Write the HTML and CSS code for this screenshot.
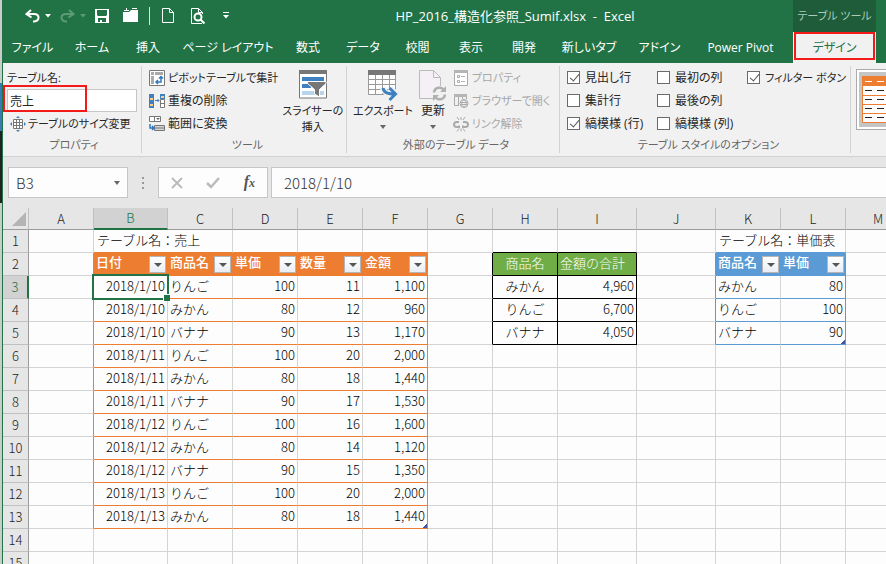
FILE: index.html
```
<!DOCTYPE html>
<html lang="ja">
<head>
<meta charset="UTF-8">
<meta name="viewport" content="width=device-width, initial-scale=1.0">
<title>HP_2016_構造化参照_Sumif.xlsx - Excel</title>
<link rel="stylesheet" href="styles.css">
</head>
<body>
<div class="app">
    <header class="top">
        <div class="top-main">
            <div class="titlebar">
                <div class="quick">
                    <button aria-label="元に戻す"><svg width="15" height="14" viewBox="0 0 15 14" fill="none" stroke="#fff" stroke-width="2"><path d="M6 1L1.500 5L6.500 8.500M2 5H9C15 5 15 12 9 12.500H8"/></svg></button>
                    <button aria-label="元に戻すの一覧"><svg width="6" height="4" viewBox="0 0 6 4"><path d="M0 0H6L3 3.500Z" fill="#fff"/></svg></button>
                    <button aria-label="やり直し"><svg width="15" height="14" viewBox="0 0 15 14" fill="none" stroke="#5c9a77" stroke-width="2"><path d="M9 1L13.500 5L8.500 8.500M13 5H6C0 5 0 12 6 12.500H7"/></svg></button>
                    <button aria-label="やり直しの一覧"><svg width="6" height="4" viewBox="0 0 6 4"><path d="M0 0H6L3 3.500Z" fill="#5c9a77"/></svg></button>
                    <button aria-label="上書き保存"><svg width="14" height="14" viewBox="0 0 14 14"><path fill="#fff" fill-rule="evenodd" d="M0 0H14V14H0ZM2 1V6L3 7H11L12 6V1ZM3 9V13H5V11H7V13H11V9Z"/></svg></button>
                    <button aria-label="開く"><svg width="16" height="15" viewBox="0 0 16 15"><path fill="#fff" d="M0 4H6L8 2H15V14H0ZM1 2H3V0H4V2H6V3H1ZM9 0H14V1H9Z"/></svg></button>
                    <span class="quick-line"></span>
                    <button aria-label="新規"><svg width="12" height="15" viewBox="0 0 12 15" fill="none" stroke="#fff"><path d="M.5.5H7.500L11.500 4.500V14.500H.5ZM7.500.5V4.500H11.500"/></svg></button>
                    <button aria-label="印刷プレビュー"><svg width="15" height="16" viewBox="0 0 15 16" fill="none" stroke="#fff"><path d="M11 15.500H.5V.5H7.500L11.500 4.500V6M7.500.5V4.500H11.500"/><circle cx="7" cy="9" r="3.500" stroke-width="2"/><path d="M9.500 11.500L13.500 15.500" stroke-width="2"/></svg></button>
                    <button aria-label="クイック アクセスの設定"><svg width="6" height="7" viewBox="0 0 6 7"><path d="M0 0H6V1H0ZM0 3H6L3 6.500Z" fill="#fff"/></svg></button>
                </div>
                <div class="title">HP_2016_構造化参照_Sumif.xlsx &nbsp;-&nbsp; Excel</div>
            </div>
            <nav class="tabs">
                <button>ファイル</button>
                <button>ホーム</button>
                <button>挿入</button>
                <button>ページ レイアウト</button>
                <button>数式</button>
                <button>データ</button>
                <button>校閲</button>
                <button>表示</button>
                <button>開発</button>
                <button>新しいタブ</button>
                <button>アドイン</button>
                <button>Power Pivot</button>
            </nav>
        </div>
        <div class="context">
            <div class="context-name">テーブル ツール</div>
            <button class="context-tab">デザイン</button>
        </div>
    </header>

    <section class="ribbon">
        <div class="group group-props">
            <div class="rows">
                <label for="tableName">テーブル名:</label>
                <div class="name-field"><input type="text" id="tableName" value="売上"></div>
                <button class="cmd cmd-resize">
                    <svg width="16" height="16" viewBox="0 0 16 16"><path fill="#fff" stroke="#777" d="M3.500 3.500H12.500V12.500H3.500ZM3.500 6.500H12.500M3.500 9.500H12.500M6.500 3.500V12.500M9.500 3.500V12.500"/><path fill="#3f80c0" d="M8 0L10 2H6ZM8 16L10 14H6ZM0 8L2 6V10ZM16 8L14 6V10Z"/></svg>
                    テーブルのサイズ変更
                </button>
            </div>
            <div class="group-name">プロパティ</div>
        </div>

        <div class="group group-tools">
            <div class="cols">
                <div class="rows">
                    <button class="cmd">
                        <svg width="16" height="16" viewBox="0 0 16 16"><path fill="#fff" stroke="#777" d="M.5.5H15.500V15.500H.5Z"/><path fill="#aaa" d="M2 2H5V5H2ZM6 2H14V5H6ZM2 6H5V14H2Z"/><path fill="none" stroke="#2f78c0" stroke-width="1.500" d="M12 6.500V12H7M10 8.500L12 6.500L14 8.500M9 10L7 12L9 14"/></svg>
                        ピボットテーブルで集計
                    </button>
                    <button class="cmd cmd-wide">
                        <svg width="16" height="16" viewBox="0 0 16 16"><path fill="#3f80c0" d="M0 1H5V15H0ZM11 1H16V6H11Z"/><path fill="#f5d18a" d="M1 5H4V7H1ZM1 11H4V13H1ZM12 3H15V5H12Z"/><path fill="#fff" stroke="#777" d="M11.500 6.500H15.500V14.500H11.500ZM11.500 10.500H15.500"/><path fill="none" stroke="#3f80c0" d="M6 7.500H10M8.500 6L10 7.500L8.500 9"/></svg>
                        重複の削除
                    </button>
                    <button class="cmd cmd-wide">
                        <svg width="16" height="16" viewBox="0 0 16 16"><path fill="#fff" stroke="#777" d="M.5.5H11.500V5.500H.5ZM5.500.5V5.500"/><path fill="#666" d="M7 2H11L9 4Z"/><path fill="#d5d5d5" stroke="#777" d="M5.500 9.500H15.500V14.500H5.500ZM5.500 12H15.500"/><path fill="none" stroke="#2f78c0" stroke-width="1.500" d="M1 8V12H5M3 10L5 12L3 14"/></svg>
                        範囲に変換
                    </button>
                </div>
                <button class="big big-slicer">
                    <svg width="28" height="29" viewBox="0 0 28 29"><path fill="#fff" stroke="#777" d="M.5.5H27.500V28H.5Z"/><path fill="#777" d="M0 0H28V4H0Z"/><path fill="#3f80c0" d="M3 7H25V11H3ZM3 14H12V18H3Z"/><path fill="#b8d4ec" d="M3 21H25V25H3Z"/><path fill="#777" stroke="#fff" d="M8.500 11.500H27V13.500L20.500 19.500V27L15.500 24V19.500L8.500 13.500Z"/></svg>
                    <span>スライサーの<br>挿入</span>
                </button>
            </div>
            <div class="group-name">ツール</div>
        </div>

        <div class="group group-external">
            <div class="cols">
                <button class="big big-export">
                    <svg width="30" height="31" viewBox="0 0 30 31"><path fill="#fff" stroke="#999" d="M.5.5H27.500V24.500H.5ZM.5 9.500H27.500M.5 14.500H27.500M.5 19.500H27.500M7.500 4V24M14.500 4V24M21.500 4V24"/><path fill="#777" d="M0 0H28V5H0Z"/><path fill="none" stroke="#f1f1f1" stroke-width="6" d="M15 18C16 23 20 24 27 24M22 18L28 24L22 30"/><path fill="none" stroke="#3f80c0" stroke-width="3" d="M15 18C16 23 20 24 27 24M21.500 18L27.500 24L21.500 30"/></svg>
                    <span>エクスポート</span>
                    <i class="caret"></i>
                </button>
                <button class="big big-refresh">
                    <svg width="28" height="31" viewBox="0 0 28 31" fill="none"><path fill="#f5f0f6" stroke="#bbb" d="M.5.5H14.500L21.500 7.500V28.500H.5ZM14.500.5V7.500H21.500"/><circle cx="20.500" cy="23.500" r="7.500" fill="#f1f1f1"/><path stroke="#b0b0b0" stroke-width="2.500" d="M15 22.500C15.500 17 22 16.500 24.500 19.500M26 24.500C25.500 30 19 30.500 16.500 27.500"/><path fill="#b0b0b0" d="M27 16V22H21ZM14 31V25H20Z"/></svg>
                    <span>更新</span>
                    <i class="caret"></i>
                </button>
                <div class="rows rows-off">
                    <button class="cmd" disabled>
                        <svg width="16" height="16" viewBox="0 0 16 16"><path fill="#fff" stroke="#aaa" d="M1.500.5H14.500V15.500H1.500Z"/><path fill="#b5b5b5" d="M1 0H15V3H1ZM8 6H12V7H8ZM8 11H12V12H8Z"/><path fill="none" stroke="#aaa" d="M4.500 5.500H6.500V7.500H4.500ZM4.500 10.500H6.500V12.500H4.500Z"/></svg>
                        プロパティ
                    </button>
                    <button class="cmd" disabled>
                        <svg width="16" height="16" viewBox="0 0 16 16" fill="none" stroke="#aaa"><path d="M1.500 1.500H13.500V6M1.500 1.500V12.500H6M5.500 3V12M9.500 3V6"/><path fill="#b5b5b5" stroke="none" d="M1 1H14V4H1Z"/><circle cx="11" cy="10.500" r="4" fill="#f1f1f1"/><path d="M7 9.500H15M7 11.500H15M11 6.500C8 9 8 12 11 14.500C14 12 14 9 11 6.500"/></svg>
                        ブラウザーで開く
                    </button>
                    <button class="cmd" disabled>
                        <svg width="16" height="16" viewBox="0 0 16 16" fill="none" stroke="#aaa"><path stroke-width="2" d="M6 6H4C0 6 0 11 4 11H6V9.500M10 6H12C16 6 16 11 12 11H10V9.500"/><path d="M8 1V4M4 1L6 4M12 1L10 4M8 12.500V15.500M4 15.500L6 12.500M12 15.500L10 12.500"/></svg>
                        リンク解除
                    </button>
                </div>
            </div>
            <div class="group-name">外部のテーブル データ</div>
        </div>

        <div class="group group-options">
            <div class="checks">
                <label><input type="checkbox" checked>見出し行</label>
                <label><input type="checkbox">最初の列</label>
                <label class="check-filter"><input type="checkbox" checked>フィルター ボタン</label>
                <label><input type="checkbox">集計行</label>
                <label><input type="checkbox">最後の列</label>
                <span></span>
                <label><input type="checkbox" checked>縞模様 (行)</label>
                <label><input type="checkbox">縞模様 (列)</label>
            </div>
            <div class="group-name">テーブル スタイルのオプション</div>
        </div>

        <div class="gallery">
            <button class="style-thumb" aria-label="テーブル スタイル">
                <svg width="60" height="47" viewBox="0 0 60 47"><path fill="#fff" stroke="#ed7d31" d="M.5.5H59.500V46.500H.5ZM0 19.500H60M0 28.500H60M0 37.500H60"/><path fill="#ed7d31" d="M0 0H60V10H0Z"/><path stroke="#fff" stroke-dasharray="7 5" d="M3 5.500H60"/><path stroke="#222" stroke-dasharray="7 5" d="M3 14.500H60M3 23.500H60M3 32.500H60M3 41.500H60"/></svg>
            </button>
        </div>
    </section>

    <section class="formula-bar">
        <div class="name-box">
            <input type="text" value="B3" aria-label="名前ボックス">
            <i class="caret"></i>
        </div>
        <svg class="dots" width="2" height="12" viewBox="0 0 2 12"><path fill="#999" d="M0 0H2V2H0ZM0 5H2V7H0ZM0 10H2V12H0Z"/></svg>
        <div class="fx-box">
            <button aria-label="キャンセル"><svg width="12" height="12" viewBox="0 0 12 12"><path stroke="#bbb" stroke-width="2" d="M1 1L11 11M11 1L1 11"/></svg></button>
            <button aria-label="入力"><svg width="14" height="12" viewBox="0 0 14 12"><path fill="none" stroke="#bbb" stroke-width="2.500" d="M1 6L5 10L13 1"/></svg></button>
            <button class="fx" aria-label="関数の挿入">f<small>x</small></button>
        </div>
        <input class="formula" type="text" value="2018/1/10" aria-label="数式バー">
    </section>

    <main class="sheet">
        <table>
            <colgroup>
                <col class="w-head"><col><col class="w-date"><col><col><col><col><col><col><col class="w-wide"><col class="w-wide"><col><col><col>
            </colgroup>
            <thead>
                <tr><th class="corner"><svg width="14" height="14" viewBox="0 0 14 14"><path fill="#b4b4b4" d="M14 0V14H0Z"/></svg></th><th>A</th><th class="active">B</th><th>C</th><th>D</th><th>E</th><th>F</th><th>G</th><th>H</th><th>I</th><th>J</th><th>K</th><th>L</th><th>M</th></tr>
            </thead>
            <tbody>
                <tr class="captions"><th>1</th><td></td><td colspan="2">テーブル名：売上</td><td></td><td></td><td></td><td></td><td></td><td></td><td></td><td colspan="2">テーブル名：単価表</td><td></td></tr>
                <tr class="sales lookup heads">
                    <th>2</th><td></td>
                    <td><div class="head">日付<button class="filter" aria-label="日付"></button></div></td>
                    <td><div class="head">商品名<button class="filter" aria-label="商品名"></button></div></td>
                    <td><div class="head">単価<button class="filter" aria-label="単価"></button></div></td>
                    <td><div class="head">数量<button class="filter" aria-label="数量"></button></div></td>
                    <td><div class="head">金額<button class="filter" aria-label="金額"></button></div></td>
                    <td></td><td>商品名</td><td>金額の合計</td><td></td>
                    <td><div class="head">商品名<button class="filter" aria-label="商品名"></button></div></td>
                    <td><div class="head">単価<button class="filter" aria-label="単価"></button></div></td>
                    <td></td>
                </tr>
                <tr class="sales lookup"><th class="active">3</th><td></td><td class="selected">2018/1/10</td><td>りんご</td><td>100</td><td>11</td><td>1,100</td><td></td><td>みかん</td><td>4,960</td><td></td><td>みかん</td><td>80</td><td></td></tr>
                <tr class="sales lookup"><th>4</th><td></td><td>2018/1/10</td><td>みかん</td><td>80</td><td>12</td><td>960</td><td></td><td>りんご</td><td>6,700</td><td></td><td>りんご</td><td>100</td><td></td></tr>
                <tr class="sales lookup"><th>5</th><td></td><td>2018/1/10</td><td>バナナ</td><td>90</td><td>13</td><td>1,170</td><td></td><td>バナナ</td><td>4,050</td><td></td><td>バナナ</td><td class="last">90</td><td></td></tr>
                <tr class="sales"><th>6</th><td></td><td>2018/1/11</td><td>りんご</td><td>100</td><td>20</td><td>2,000</td><td></td><td></td><td></td><td></td><td></td><td></td><td></td></tr>
                <tr class="sales"><th>7</th><td></td><td>2018/1/11</td><td>みかん</td><td>80</td><td>18</td><td>1,440</td><td></td><td></td><td></td><td></td><td></td><td></td><td></td></tr>
                <tr class="sales"><th>8</th><td></td><td>2018/1/11</td><td>バナナ</td><td>90</td><td>17</td><td>1,530</td><td></td><td></td><td></td><td></td><td></td><td></td><td></td></tr>
                <tr class="sales"><th>9</th><td></td><td>2018/1/12</td><td>りんご</td><td>100</td><td>16</td><td>1,600</td><td></td><td></td><td></td><td></td><td></td><td></td><td></td></tr>
                <tr class="sales"><th>10</th><td></td><td>2018/1/12</td><td>みかん</td><td>80</td><td>14</td><td>1,120</td><td></td><td></td><td></td><td></td><td></td><td></td><td></td></tr>
                <tr class="sales"><th>11</th><td></td><td>2018/1/12</td><td>バナナ</td><td>90</td><td>15</td><td>1,350</td><td></td><td></td><td></td><td></td><td></td><td></td><td></td></tr>
                <tr class="sales"><th>12</th><td></td><td>2018/1/13</td><td>りんご</td><td>100</td><td>20</td><td>2,000</td><td></td><td></td><td></td><td></td><td></td><td></td><td></td></tr>
                <tr class="sales"><th>13</th><td></td><td>2018/1/13</td><td>みかん</td><td>80</td><td>18</td><td class="last">1,440</td><td></td><td></td><td></td><td></td><td></td><td></td><td></td></tr>
                <tr><th>14</th><td></td><td></td><td></td><td></td><td></td><td></td><td></td><td></td><td></td><td></td><td></td><td></td><td></td></tr>
                <tr><th>15</th><td></td><td></td><td></td><td></td><td></td><td></td><td></td><td></td><td></td><td></td><td></td><td></td><td></td></tr>
            </tbody>
        </table>
    </main>
</div>
</body>
</html>
```
FILE: styles.css
```
* {
    box-sizing: border-box;
}
body {
    margin: 0;
    overflow: hidden;
    background: linear-gradient(#c9cdca 83px, #3b79b4 83px, #3b79b4 131px, #222 131px, #222 203px, #c9cdca 203px);
    font-family: "Open Sans", "Noto Sans CJK JP", sans-serif;
    font-size: 12px;
    line-height: 16px;
    color: #262626;
}
button, input {
    font: inherit;
    color: inherit;
    padding: 0;
    margin: 0;
    border: none;
    background: none;
    outline: none;
}
svg {
    display: block;
    flex: none;
}
.app {
    display: flex;
    flex-direction: column;
    height: 100vh;
    margin-left: 2px;
    border-left: 1px solid #217346;
    background: #e6e6e6;
}
.caret {
    border: 3px solid transparent;
    border-top: 4px solid #666;
    border-bottom: none;
}

/* title bar and tabs */
.top {
    display: flex;
    padding-right: 10px;
    background: #217346;
    color: #fff;
    font-feature-settings: "palt";
}
.top-main {
    flex: 1;
}
.titlebar {
    display: flex;
    align-items: center;
    height: 31px;
}
.quick {
    display: grid;
    grid-template-columns: 20px 15px 20px 15px 28px 26px 13px 29px 32px 14px;
    align-items: center;
    padding-left: 22px;
}
.quick-line {
    width: 1px;
    height: 18px;
    background: #d5e5dc;
}
.title {
    flex: 1;
    text-align: center;
    font-size: 13px;
    white-space: nowrap;
}
.tabs {
    display: grid;
    grid-template-columns: 59px 60px 52px 108px 52px 58px 51px 56px 50px 80px 61px 101px;
    height: 32px;
    padding-top: 2px;
    white-space: nowrap;
}
.context {
    width: 83px;
    text-align: center;
}
.context-name {
    height: 32px;
    line-height: 32px;
    font-size: 11px;
    background: #1e5c3a;
    color: #a9cdb8;
}
.context-tab {
    position: relative;
    width: 100%;
    height: 31px;
    background: #f1f1f1;
    color: #217346;
}
.context-tab::after, .name-field::after {
    content: "";
    position: absolute;
    border: 2px solid #f51a1a;
    pointer-events: none;
}
.context-tab::after {
    inset: 0 1px 3px 1px;
}

/* ribbon */
.ribbon {
    display: flex;
    height: 94px;
    padding: 3px 0;
    background: #f1f1f1;
    border-bottom: 1px solid #d2d2d2;
    font-size: 11px;
    white-space: nowrap;
    font-feature-settings: "palt";
    overflow: hidden;
}
.group {
    display: flex;
    flex-direction: column;
    justify-content: space-between;
    flex: none;
    border-right: 1px solid #d2d2d2;
}
.group-props {
    width: 139px;
    padding-left: 4px;
}
.group-tools {
    width: 205px;
    padding-left: 7px;
}
.group-external {
    width: 213px;
    padding-left: 6px;
}
.group-options {
    width: 291px;
    padding-left: 7px;
}
.group-name {
    text-align: center;
    color: #666;
    line-height: 17px;
}
.rows {
    display: grid;
    grid-template-rows: repeat(3, 23px);
    align-items: center;
}
.cols {
    display: flex;
}
.cmd {
    display: flex;
    align-items: center;
    gap: 3px;
}
.cmd-wide {
    font-size: 12px;
}
.cmd-resize {
    padding-left: 3px;
    gap: 2px;
}
.cmd:disabled {
    color: #a8a8a8;
}
.name-field {
    position: relative;
    width: 130px;
    height: 23px;
}
.name-field input {
    width: 100%;
    height: 100%;
    padding-left: 2px;
    font-size: 12px;
    background: #fff;
    border: 1px solid #c6c6c6;
}
.name-field::after {
    inset: -4px 50px 0 -4px;
}
.big {
    display: flex;
    flex-direction: column;
    align-items: center;
    padding-top: 4px;
}
.big .caret {
    margin-top: 4px;
}
.big-slicer {
    margin-left: 4px;
    gap: 4px;
}
.big-export, .big-refresh {
    gap: 2px;
}
.big-refresh {
    margin-left: 6px;
    font-size: 12px;
}
.rows-off {
    margin-left: 6px;
}
.checks {
    display: grid;
    grid-template-columns: 90px 90px 90px;
    grid-auto-rows: 23px;
    align-items: center;
    font-size: 12px;
}
.checks label {
    display: flex;
    align-items: center;
    gap: 5px;
}
.checks .check-filter {
    font-size: 11px;
}
.checks input {
    appearance: none;
    flex: none;
    width: 13px;
    height: 13px;
    border: 1px solid #6a6a6a;
    background: #fff;
}
.checks input:checked::before {
    content: "";
    display: block;
    width: 4px;
    height: 8px;
    margin-left: 4px;
    border: solid #555;
    border-width: 0 1px 1px 0;
    transform: rotate(40deg);
}
.gallery {
    flex: 1;
    align-self: flex-start;
    margin: 3px 0 0 5px;
    padding: 2px 0 2px 2px;
    border: 1px solid #ababab;
    border-right: none;
    background: #fff;
    overflow: hidden;
}
.style-thumb {
    display: block;
    padding: 4px 0 4px 3px;
    background: #c5c5c5;
}

/* formula bar */
.formula-bar {
    display: flex;
    align-items: center;
    padding: 10px 0 10px 5px;
    font-family: "Noto Sans CJK JP", sans-serif;
    font-size: 15px;
    font-weight: 300;
    color: #333;
}
.name-box, .fx-box, .formula {
    height: 31px;
    background: #fdfdfd;
    border: 1px solid #c6c6c6;
}
.name-box {
    display: flex;
    align-items: center;
    width: 120px;
    padding: 0 7px;
}
.name-box input {
    flex: 1;
    min-width: 0;
}
.dots {
    margin: 0 14px;
}
.fx-box {
    display: flex;
    align-items: center;
    justify-content: space-between;
    width: 110px;
    padding: 0 12px;
    margin-right: 3px;
}
.fx {
    font-family: "Liberation Serif", serif;
    font-style: italic;
    font-weight: bold;
    font-size: 16px;
    color: #555;
}
.fx small {
    font-size: 12px;
}
.formula {
    flex: 1;
    min-width: 0;
    padding-left: 12px;
    border-right: none;
}

/* worksheet */
.sheet {
    flex: 1;
    overflow: hidden;
    background: #fdfdfd;
    font-family: "Noto Sans CJK JP", sans-serif;
    font-size: 13px;
    font-weight: 300;
    color: #000;
}
table {
    width: 908px;
    table-layout: fixed;
    border-collapse: separate;
    border-spacing: 0;
    line-height: 18px;
}
col {
    width: 65px;
}
.w-head {
    width: 26px;
}
.w-date {
    width: 74px;
}
.w-wide {
    width: 79px;
}
th {
    padding: 0;
    background: #e6e6e6;
    font-weight: 300;
    color: #222;
    border-right: 1px solid #c0c0c0;
    border-bottom: 1px solid #9b9b9b;
}
thead th {
    height: 22px;
}
tbody th {
    height: 23px;
    border-right-color: #9b9b9b;
    border-bottom-color: #c0c0c0;
}
th.active {
    background: #d2d2d2;
    color: #217346;
}
thead th.active {
    border-bottom: 2px solid #217346;
}
tbody th.active {
    border-right: 2px solid #217346;
}
.corner svg {
    margin-left: 9px;
}
td {
    height: 23px;
    padding: 0 2px 2px;
    border-right: 1px solid #d4d4d4;
    border-bottom: 1px solid #d4d4d4;
    white-space: nowrap;
}
.captions td {
    padding-left: 3px;
}

/* sales table, B to F */
.sales td:nth-child(3), .sales td:nth-child(n+5):nth-child(-n+7) {
    text-align: right;
}
.captions td:nth-child(n+3):nth-child(-n+6),
.sales td:nth-child(n+3):nth-child(-n+7) {
    border-bottom-color: #ed7d31;
}
.sales td:nth-child(2), .sales td:nth-child(7) {
    border-right-color: #ed7d31;
}
.heads td:nth-child(n+3):nth-child(-n+7) {
    background: #ed7d31;
    border-color: #ed7d31;
}

/* totals in H and I, price list in K and L */
.lookup td:nth-child(9) {
    text-align: center;
}
.lookup td:nth-child(10), .lookup td:nth-child(13) {
    text-align: right;
}
.captions td:nth-child(8), .captions td:nth-child(9),
.lookup td:nth-child(9), .lookup td:nth-child(10) {
    border-bottom-color: #000;
}
.lookup td:nth-child(n+8):nth-child(-n+10) {
    border-right-color: #000;
}
.captions td:nth-child(11),
.lookup td:nth-child(12), .lookup td:nth-child(13) {
    border-bottom-color: #5b9bd5;
}
.lookup td:nth-child(11), .lookup td:nth-child(13) {
    border-right-color: #5b9bd5;
}
.heads td {
    color: #fff;
}
.heads td:nth-child(9), .heads td:nth-child(10) {
    background: #70ad47;
    text-align: left;
}
.heads td:nth-child(9) {
    text-align: center;
}
.heads td:nth-child(12), .heads td:nth-child(13) {
    background: #5b9bd5;
    border-right-color: #5b9bd5;
}
.head {
    display: flex;
    justify-content: space-between;
    height: 20px;
    margin-right: -1px;
    font-weight: 500;
}
.filter {
    display: flex;
    align-items: center;
    justify-content: center;
    align-self: flex-end;
    flex: none;
    width: 17px;
    height: 17px;
    background: linear-gradient(#fff, #e9eef4);
    border: 1px solid #b5b5b5;
}
.filter::before {
    content: "";
    border: 4px solid transparent;
    border-top-color: #555;
    border-bottom: none;
}
.selected, .last {
    position: relative;
}
.selected::before {
    content: "";
    position: absolute;
    inset: -2px -2px -2px -2px;
    border: 2px solid #217346;
}
.selected::after {
    content: "";
    position: absolute;
    right: -3px;
    bottom: -3px;
    width: 6px;
    height: 6px;
    background: #217346;
    border: solid #fdfdfd;
    border-width: 1px 0 0 1px;
}
.last::after {
    content: "";
    position: absolute;
    right: 0;
    bottom: 0;
    width: 4px;
    height: 4px;
    background: linear-gradient(135deg, transparent 40%, #4356a5 40%);
}
```
